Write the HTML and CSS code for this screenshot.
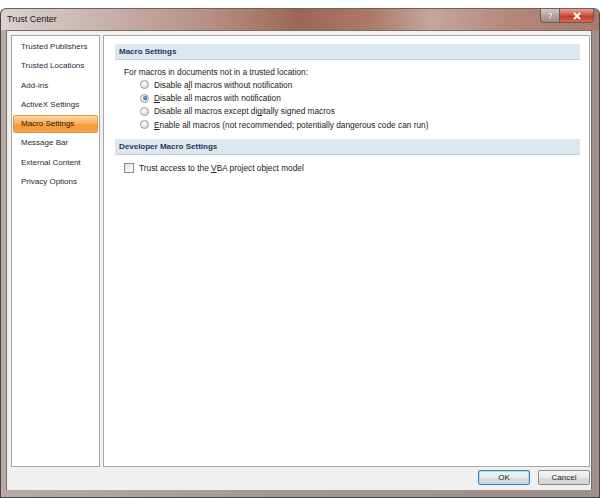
FILE: index.html
```html
<!DOCTYPE html>
<html>
<head>
<meta charset="utf-8">
<link rel="stylesheet" href="styles.css">
</head>
<body>
<div class="window">
  <div class="titlebar">
    <span class="title">Trust Center</span>
    <div class="caption-buttons">
      <div class="cbtn help">?</div>
      <div class="cbtn close">
        <svg width="10" height="8" viewBox="0 0 10 8"><path d="M2 1 L8 7 M8 1 L2 7" stroke="#fff" stroke-width="2"/></svg>
      </div>
    </div>
  </div>
  <div class="client">
    <div class="main">
      <ul class="nav">
        <li>Trusted Publishers</li>
        <li>Trusted Locations</li>
        <li>Add-ins</li>
        <li>ActiveX Settings</li>
        <li class="active">Macro Settings</li>
        <li>Message Bar</li>
        <li>External Content</li>
        <li>Privacy Options</li>
      </ul>
      <div class="content">
        <div class="section-head">Macro Settings</div>
        <div class="intro">For macros in documents not in a trusted location:</div>
        <div class="options">
          <div class="opt"><span class="radio"></span><span>Disable a<u>l</u>l macros without notification</span></div>
          <div class="opt"><span class="radio checked"></span><span><u>D</u>isable all macros with notification</span></div>
          <div class="opt"><span class="radio"></span><span>Disable all macros except di<u>g</u>itally signed macros</span></div>
          <div class="opt"><span class="radio"></span><span><u>E</u>nable all macros (not recommended; potentially dangerous code can run)</span></div>
        </div>
        <div class="section-head second">Developer Macro Settings</div>
        <div class="check-row"><span class="checkbox"></span><span>Trust access to the <u>V</u>BA project object model</span></div>
      </div>
    </div>
    <div class="footer">
      <button class="btn default">OK</button>
      <button class="btn">Cancel</button>
    </div>
  </div>
</div>
</body>
</html>
```
FILE: styles.css
```css
html, body {
  margin: 0;
  padding: 0;
  background: #ffffff;
}
body {
  width: 600px;
  height: 498px;
  overflow: hidden;
  font-family: "Liberation Sans", Arial, sans-serif;
  font-size: 8px;
  color: #222222;
}
.window {
  margin-top: 8px;
  height: 490px;
  width: 600px;
  box-sizing: border-box;
  display: flex;
  flex-direction: column;
  background: linear-gradient(90deg, #b8aaa6 0%, #a39590 50%, #9d8e88 100%);
  border: 1px solid #4c4440;
  border-top-color: #6e625e;
  border-radius: 6px 6px 0 0;
  padding: 0 7px 7px 5px;
}
.titlebar {
  height: 21px;
  display: flex;
  align-items: flex-start;
  margin: 0 -7px 0 -5px;
  padding: 0 5px 0 5px;
  background: linear-gradient(90deg, #dcd2cf 0%, #c9b6b0 15%, #b68f82 35%, #9c6656 50%, #ad7a6a 62%, #c6a69c 72%, #b5877a 85%, #a87a6c 100%);
  border-radius: 6px 6px 0 0;
}
.title {
  font-size: 9px;
  color: #1a1a1a;
  line-height: 20px;
  padding-left: 1px;
}
.caption-buttons {
  margin-left: auto;
  display: flex;
}
.cbtn {
  height: 13px;
  display: flex;
  align-items: center;
  justify-content: center;
  border: 1px solid #6d5a55;
  border-top: none;
  color: #fff;
  font-weight: bold;
  font-size: 9px;
}
.help {
  width: 18px;
  border-radius: 0 0 0 4px;
  background: linear-gradient(180deg, #d8c9c5 0%, #b8a29c 50%, #a38a84 100%);
  text-shadow: 0 0 1px #333;
  border-right: none;
}
.close {
  width: 33px;
  border-radius: 0 0 4px 0;
  background: linear-gradient(180deg, #e8a196 0%, #d3594a 45%, #c23a2a 55%, #d06a5c 100%);
}
.client {
  flex: 1;
  background: #f0f0f0;
  display: flex;
  flex-direction: column;
  padding: 4px 1px 0 4px;
  border: 1px solid #7a6e6a;
  border-bottom: none;
}
.main {
  flex: 1;
  display: flex;
  gap: 3px;
}
.nav {
  list-style: none;
  margin: 0;
  padding: 2px 1px 0 1px;
  width: 89px;
  background: #fff;
  border: 1px solid #a7a7a7;
  box-sizing: border-box;
}
.nav li {
  height: 18px;
  line-height: 18px;
  padding-left: 8px;
  margin-bottom: 1.3px;
  color: #1f2a36;
  white-space: nowrap;
}
.nav li.active {
  background: linear-gradient(180deg, #fdd7a0 0%, #fbb565 40%, #f89a36 60%, #f6a54c 100%);
  border: 1px solid #d99848;
  border-radius: 2px;
  line-height: 16px;
  height: 16px;
  padding-left: 7px;
  color: #1a1a1a;
}
.content {
  flex: 1;
  background: #fff;
  border: 1px solid #a7a7a7;
  padding: 8px 9px 0 11px;
  font-size: 8.3px;
}
.section-head {
  height: 15px;
  line-height: 15px;
  background: #dde7f0;
  border-bottom: 1px solid #c3cfdb;
  font-weight: bold;
  font-size: 8px;
  color: #1e395b;
  padding-left: 4px;
}
.section-head.second {
  margin-top: 7px;
}
.intro {
  margin-top: 7px;
  padding-left: 9px;
  line-height: 11px;
}
.options {
  padding-left: 25px;
}
.opt {
  display: flex;
  align-items: center;
  height: 13.4px;
  gap: 5px;
}
.radio {
  width: 7px;
  height: 7px;
  border-radius: 50%;
  border: 1px solid #9c9c9c;
  background: radial-gradient(circle at 35% 35%, #ffffff 0%, #e2e2e2 60%, #cfcfcf 100%);
  position: relative;
  flex: none;
}
.radio.checked::after {
  content: "";
  position: absolute;
  left: 1.5px;
  top: 1.5px;
  width: 4px;
  height: 4px;
  border-radius: 50%;
  background: radial-gradient(circle at 40% 40%, #7fb8e8 0%, #1f5e9a 60%, #173f66 100%);
}
.check-row {
  display: flex;
  align-items: center;
  gap: 5px;
  margin-top: 6px;
  padding-left: 9px;
  height: 14px;
}
.checkbox {
  width: 8px;
  height: 8px;
  border: 1px solid #8f8f8f;
  background: linear-gradient(135deg, #dcdcdc 0%, #f4f4f4 60%, #ffffff 100%);
  flex: none;
}
.footer {
  height: 23px;
  display: flex;
  align-items: flex-start;
  justify-content: flex-end;
  gap: 8px;
  padding-top: 3px;
  box-sizing: border-box;
}
.btn {
  width: 52px;
  height: 15px;
  padding: 0;
  font-family: "Liberation Sans", Arial, sans-serif;
  font-size: 8px;
  color: #1a1a1a;
  background: linear-gradient(180deg, #f4f4f4 0%, #ebebeb 50%, #dcdcdc 51%, #d4d4d4 100%);
  border: 1px solid #8a8a8a;
  border-radius: 2px;
}
.btn.default {
  border-color: #3c7fb1;
  box-shadow: inset 0 0 0 1px #a9dcf5;
}
```
